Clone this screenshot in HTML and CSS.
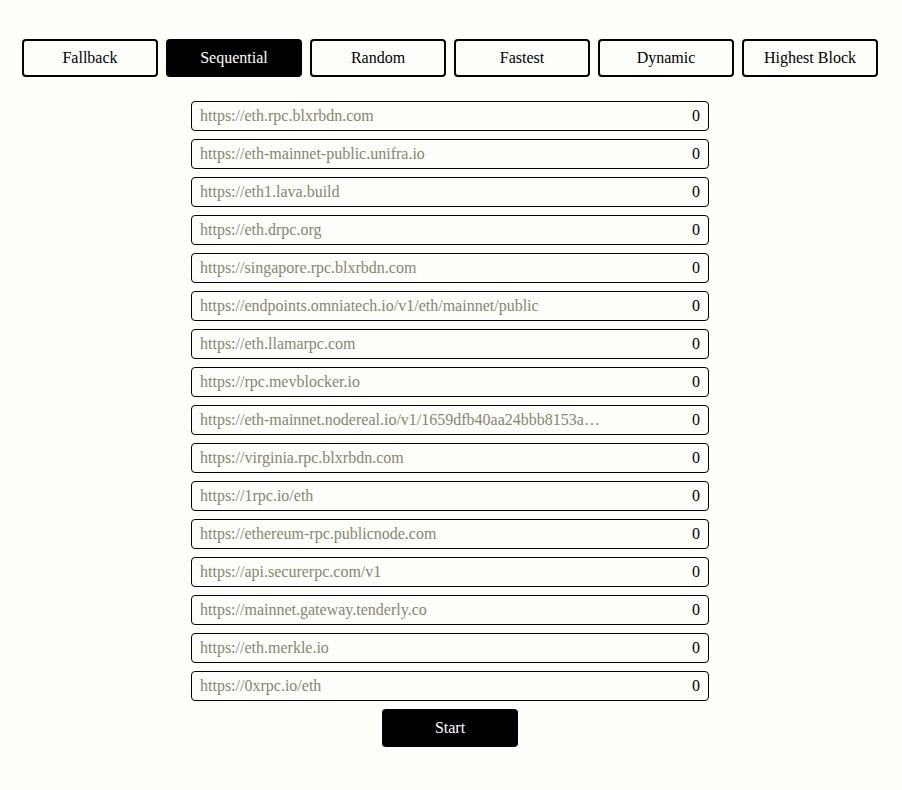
FILE: index.html
```
<!DOCTYPE html>
<html>
<head>
<meta charset="utf-8">
<link rel="stylesheet" href="styles.css">
</head>
<body>
<div class="page">
  <div class="modes">
    <button class="mode">Fallback</button>
    <button class="mode active">Sequential</button>
    <button class="mode">Random</button>
    <button class="mode">Fastest</button>
    <button class="mode">Dynamic</button>
    <button class="mode">Highest Block</button>
  </div>
  <div class="list">
    <div class="row"><span class="url">https://eth.rpc.blxrbdn.com</span><span class="count">0</span></div>
    <div class="row"><span class="url">https://eth-mainnet-public.unifra.io</span><span class="count">0</span></div>
    <div class="row"><span class="url">https://eth1.lava.build</span><span class="count">0</span></div>
    <div class="row"><span class="url">https://eth.drpc.org</span><span class="count">0</span></div>
    <div class="row"><span class="url">https://singapore.rpc.blxrbdn.com</span><span class="count">0</span></div>
    <div class="row"><span class="url">https://endpoints.omniatech.io/v1/eth/mainnet/public</span><span class="count">0</span></div>
    <div class="row"><span class="url">https://eth.llamarpc.com</span><span class="count">0</span></div>
    <div class="row"><span class="url">https://rpc.mevblocker.io</span><span class="count">0</span></div>
    <div class="row"><span class="url">https://eth-mainnet.nodereal.io/v1/1659dfb40aa24bbb8153a…</span><span class="count">0</span></div>
    <div class="row"><span class="url">https://virginia.rpc.blxrbdn.com</span><span class="count">0</span></div>
    <div class="row"><span class="url">https://1rpc.io/eth</span><span class="count">0</span></div>
    <div class="row"><span class="url">https://ethereum-rpc.publicnode.com</span><span class="count">0</span></div>
    <div class="row"><span class="url">https://api.securerpc.com/v1</span><span class="count">0</span></div>
    <div class="row"><span class="url">https://mainnet.gateway.tenderly.co</span><span class="count">0</span></div>
    <div class="row"><span class="url">https://eth.merkle.io</span><span class="count">0</span></div>
    <div class="row"><span class="url">https://0xrpc.io/eth</span><span class="count">0</span></div>
  </div>
  <button class="start">Start</button>
</div>
</body>
</html>
```
FILE: styles.css
```
html, body {
  margin: 0;
  padding: 0;
  background: #fefefb;
}
body {
  font-family: "Liberation Serif", "Times New Roman", serif;
  font-size: 16px;
  color: #000;
}
.page {
  display: flex;
  flex-direction: column;
  align-items: center;
  padding-top: 39px;
}
.modes {
  display: flex;
  gap: 8px;
  margin-bottom: 24px;
  margin-left: -2px;
}
.mode {
  width: 136px;
  height: 38px;
  box-sizing: border-box;
  border: 2px solid #000;
  border-radius: 4px;
  background: #fefefb;
  color: #000;
  font-family: inherit;
  font-size: 16px;
  padding: 0;
}
.mode.active {
  background: #000;
  color: #fff;
}
.list {
  display: flex;
  flex-direction: column;
  gap: 8px;
  width: 518px;
  margin-left: -2px;
}
.row {
  display: flex;
  align-items: center;
  justify-content: space-between;
  height: 30px;
  box-sizing: border-box;
  border: 1px solid #000;
  border-radius: 4px;
  padding: 0 8px 0 8px;
}
.url {
  color: #86866f;
  white-space: nowrap;
}
.count {
  color: #000;
}
.start {
  margin-top: 8px;
  margin-left: -2px;
  width: 136px;
  height: 38px;
  border: none;
  border-radius: 4px;
  background: #000;
  color: #fff;
  font-family: inherit;
  font-size: 16px;
  padding: 0;
}
```
